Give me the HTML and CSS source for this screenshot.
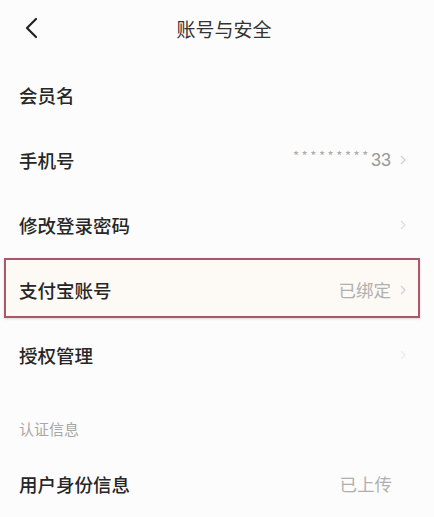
FILE: index.html
```html
<!DOCTYPE html>
<html lang="zh-CN">
<head>
<meta charset="utf-8">
<title>账号与安全</title>
<link rel="stylesheet" href="styles.css">
</head>
<body>
<div class="page">
  <header class="topbar">
    <span class="back">
      <svg width="14" height="22" viewBox="0 0 14 22"><path d="M11 2 L2 11 L11 20" fill="none" stroke="#222" stroke-width="2.2" stroke-linecap="round" stroke-linejoin="round"/></svg>
    </span>
    <h1 class="title">账号与安全</h1>
  </header>
  <ul class="list">
    <li class="row"><span class="label">会员名</span></li>
    <li class="row"><span class="label">手机号</span>
      <span class="value"><span class="mask">*********</span><span class="digits">33</span><svg class="arrow" width="6" height="10" viewBox="0 0 6 10"><path d="M1 1 L5 5 L1 9" fill="none" stroke="#d0d0d0" stroke-width="1.2"/></svg></span></li>
    <li class="row"><span class="label">修改登录密码</span>
      <span class="value"><svg class="arrow faint" width="6" height="10" viewBox="0 0 6 10"><path d="M1 1 L5 5 L1 9" fill="none" stroke="#dcdcdc" stroke-width="1.2"/></svg></span></li>
    <li class="row marked"><span class="label">支付宝账号</span>
      <span class="value">已绑定<svg class="arrow" width="6" height="10" viewBox="0 0 6 10"><path d="M1 1 L5 5 L1 9" fill="none" stroke="#d0d0d0" stroke-width="1.2"/></svg></span></li>
    <li class="row"><span class="label">授权管理</span>
      <span class="value"><svg class="arrow" width="6" height="10" viewBox="0 0 6 10"><path d="M1 1 L5 5 L1 9" fill="none" stroke="#ececec" stroke-width="1.2"/></svg></span></li>
  </ul>
  <div class="section">认证信息</div>
  <ul class="list">
    <li class="row"><span class="label">用户身份信息</span>
      <span class="value plain">已上传</span></li>
  </ul>
</div>
</body>
</html>
```
FILE: styles.css
```css
html, body {
  margin: 0;
  padding: 0;
  background: #fcfcfc;
}
.page {
  width: 434px;
  height: 517px;
  overflow: hidden;
  font-family: "Noto Sans CJK SC", "Noto Sans", sans-serif;
  color: #222;
}
.topbar {
  height: 62px;
  display: flex;
  align-items: flex-start;
  position: relative;
}
.back {
  display: flex;
  padding: 17px 0 0 25px;
}
.title {
  position: absolute;
  left: 0;
  right: 0;
  top: 16px;
  margin: 0;
  text-align: center;
  font-size: 19px;
  font-weight: 400;
  line-height: 26px;
  color: #333;
  padding-left: 14px;
}
.list {
  list-style: none;
  margin: 0;
  padding: 0;
}
.row {
  height: 65px;
  display: flex;
  align-items: center;
  justify-content: space-between;
  padding: 0 28px 0 19px;
  position: relative;
}
.label {
  font-size: 18.5px;
  font-weight: 500;
  color: #262626;
  position: relative;
  z-index: 1;
}
.value {
  display: flex;
  align-items: center;
  font-size: 17.5px;
  color: #b0b0b0;
  position: relative;
  z-index: 1;
}
.value.plain {
  margin-right: 14px;
}
.arrow {
  margin-left: 9px;
}
.mask {
  font-size: 13px;
  color: #aaa;
  letter-spacing: 2.6px;
  align-self: flex-start;
  margin-top: -2px;
}
.digits {
  font-size: 18px;
  color: #999;
  font-family: "Liberation Sans", sans-serif;
  font-weight: 300;
  margin-top: 2px;
}
.marked::after {
  content: "";
  position: absolute;
  left: 4px;
  right: 14px;
  top: 1px;
  height: 56px;
  border: 2px solid #a9576a;
  background: #fdf9f5;
  box-shadow: 0 1px 2px rgba(120, 60, 60, 0.2);
}
.section {
  height: 64px;
  box-sizing: border-box;
  padding: 34px 0 0 19px;
  font-size: 15px;
  line-height: 16px;
  color: #a8a8a8;
}
```
